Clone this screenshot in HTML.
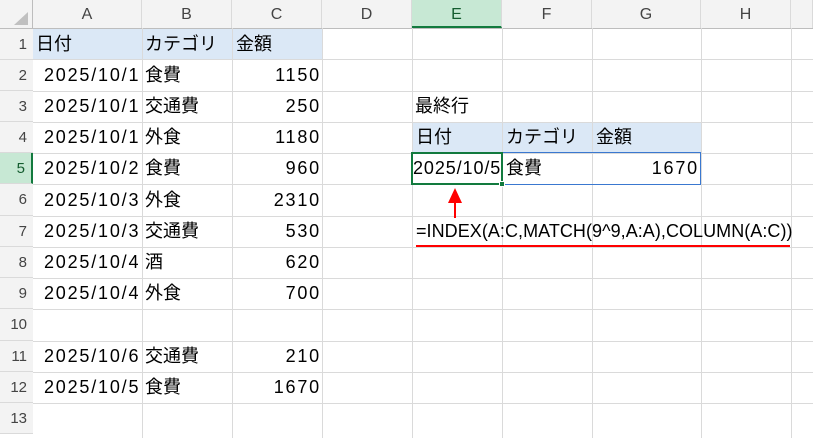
<!DOCTYPE html><html><head><meta charset="utf-8"><style>
body{margin:0;width:813px;height:433px;overflow:hidden;background:#fff;font-family:"Liberation Sans","Noto Sans CJK JP",sans-serif;position:relative}
div{position:absolute;box-sizing:border-box}
.vl{top:28px;width:1px;height:410px;background:#dadada}
.hl{left:33px;height:1px;width:780px;background:#dadada}
.ch{top:0;height:28px;background:#f3f3f3;color:#444;font-size:16px;text-align:center;line-height:30px;border-right:1px solid #dadada}
.rh{left:0;width:33px;background:#f3f3f3;color:#444;font-size:15px;text-align:right;padding-right:6px;border-bottom:1px solid #dadada}
.t{font-size:18px;color:#000;line-height:31px;white-space:nowrap}
.n{letter-spacing:1.8px}
.r{text-align:right;margin-right:-2px}
</style></head><body>
<div class="ch" style="left:0;width:33px"></div>
<div style="left:14px;top:12px;width:0;height:0;border-left:14px solid transparent;border-bottom:13px solid #c0c0c0"></div>
<div class="ch" style="left:33px;width:109px">A</div>
<div class="ch" style="left:142px;width:90px">B</div>
<div class="ch" style="left:232px;width:90px">C</div>
<div class="ch" style="left:322px;width:90px">D</div>
<div class="ch" style="left:412px;width:90px;background:#c7e8d4;color:#145c2f;border-bottom:2px solid #127a3e">E</div>
<div class="ch" style="left:502px;width:90px">F</div>
<div class="ch" style="left:592px;width:109px">G</div>
<div class="ch" style="left:701px;width:90px">H</div>
<div class="ch" style="left:791px;width:22px"></div>
<div style="left:0;top:28px;width:813px;height:1px;background:#bdbdbd"></div>
<div style="left:32px;top:0;width:1px;height:433px;background:#bdbdbd"></div>
<div style="left:33px;top:29px;width:289px;height:30px;background:#dbe8f6"></div>
<div style="left:412px;top:122px;width:289px;height:31px;background:#dbe8f6"></div>
<div class="vl" style="left:142px"></div><div class="vl" style="left:232px"></div><div class="vl" style="left:322px"></div><div class="vl" style="left:412px"></div><div class="vl" style="left:502px"></div><div class="vl" style="left:592px"></div><div class="vl" style="left:701px"></div><div class="vl" style="left:791px"></div>
<div class="hl" style="top:59px"></div><div class="hl" style="top:91px"></div><div class="hl" style="top:122px"></div><div class="hl" style="top:153px"></div><div class="hl" style="top:184px"></div><div class="hl" style="top:216px"></div><div class="hl" style="top:247px"></div><div class="hl" style="top:278px"></div><div class="hl" style="top:309px"></div><div class="hl" style="top:341px"></div><div class="hl" style="top:372px"></div><div class="hl" style="top:403px"></div>
<div class="rh" style="top:29px;height:31px;line-height:31px">1</div>
<div class="rh" style="top:60px;height:31px;line-height:31px">2</div>
<div class="rh" style="top:91px;height:31px;line-height:31px">3</div>
<div class="rh" style="top:122px;height:31px;line-height:31px">4</div>
<div class="rh" style="top:153px;height:31px;line-height:31px;background:#c7e8d4;color:#145c2f;border-right:2px solid #127a3e">5</div>
<div class="rh" style="top:184px;height:32px;line-height:32px">6</div>
<div class="rh" style="top:216px;height:31px;line-height:31px">7</div>
<div class="rh" style="top:247px;height:31px;line-height:31px">8</div>
<div class="rh" style="top:278px;height:31px;line-height:31px">9</div>
<div class="rh" style="top:309px;height:32px;line-height:32px">10</div>
<div class="rh" style="top:341px;height:31px;line-height:31px">11</div>
<div class="rh" style="top:372px;height:31px;line-height:31px">12</div>
<div class="rh" style="top:403px;height:31px;line-height:31px">13</div>
<div class="t" style="left:36px;top:29px">日付</div><div class="t" style="left:145px;top:29px">カテゴリ</div><div class="t" style="left:236px;top:29px">金額</div>
<div class="t n" style="left:44px;top:60px">2025/10/1</div><div class="t" style="left:145px;top:60px">食費</div><div class="t n r" style="left:232px;width:89px;top:60px">1150</div>
<div class="t n" style="left:44px;top:91px">2025/10/1</div><div class="t" style="left:145px;top:91px">交通費</div><div class="t n r" style="left:232px;width:89px;top:91px">250</div>
<div class="t n" style="left:44px;top:122px">2025/10/1</div><div class="t" style="left:145px;top:122px">外食</div><div class="t n r" style="left:232px;width:89px;top:122px">1180</div>
<div class="t n" style="left:44px;top:153px">2025/10/2</div><div class="t" style="left:145px;top:153px">食費</div><div class="t n r" style="left:232px;width:89px;top:153px">960</div>
<div class="t n" style="left:44px;top:185px">2025/10/3</div><div class="t" style="left:145px;top:185px">外食</div><div class="t n r" style="left:232px;width:89px;top:185px">2310</div>
<div class="t n" style="left:44px;top:216px">2025/10/3</div><div class="t" style="left:145px;top:216px">交通費</div><div class="t n r" style="left:232px;width:89px;top:216px">530</div>
<div class="t n" style="left:44px;top:247px">2025/10/4</div><div class="t" style="left:145px;top:247px">酒</div><div class="t n r" style="left:232px;width:89px;top:247px">620</div>
<div class="t n" style="left:44px;top:278px">2025/10/4</div><div class="t" style="left:145px;top:278px">外食</div><div class="t n r" style="left:232px;width:89px;top:278px">700</div>
<div class="t n" style="left:44px;top:341px">2025/10/6</div><div class="t" style="left:145px;top:341px">交通費</div><div class="t n r" style="left:232px;width:89px;top:341px">210</div>
<div class="t n" style="left:44px;top:372px">2025/10/5</div><div class="t" style="left:145px;top:372px">食費</div><div class="t n r" style="left:232px;width:89px;top:372px">1670</div>
<div class="t" style="left:415px;top:91px">最終行</div>
<div class="t" style="left:416px;top:122px">日付</div><div class="t" style="left:506px;top:122px">カテゴリ</div><div class="t" style="left:596px;top:122px">金額</div>
<div style="left:411px;top:152px;width:290px;height:33px;border:1px solid #3a78d0"></div>
<div style="left:411px;top:152px;width:92px;height:33px;border:2px solid #127a3e"></div>
<div style="left:499px;top:181px;width:6px;height:6px;background:#127a3e;border:1px solid #fff"></div>
<div class="t" style="left:413px;top:153px;letter-spacing:0.9px">2025/10/5</div><div class="t" style="left:506px;top:153px">食費</div><div class="t n r" style="left:592px;width:107px;top:153px">1670</div>
<div style="left:448px;top:188px;width:0;height:0;border-left:7px solid transparent;border-right:7px solid transparent;border-bottom:15px solid #f00"></div>
<div style="left:454px;top:202px;width:2px;height:16px;background:#f00"></div>
<div class="t" style="left:416px;top:216px;letter-spacing:0.05px">=INDEX(A:C,MATCH(9^9,A:A),COLUMN(A:C))</div>
<div style="left:416px;top:245px;width:374px;height:2px;background:#f00"></div>
</body></html>
